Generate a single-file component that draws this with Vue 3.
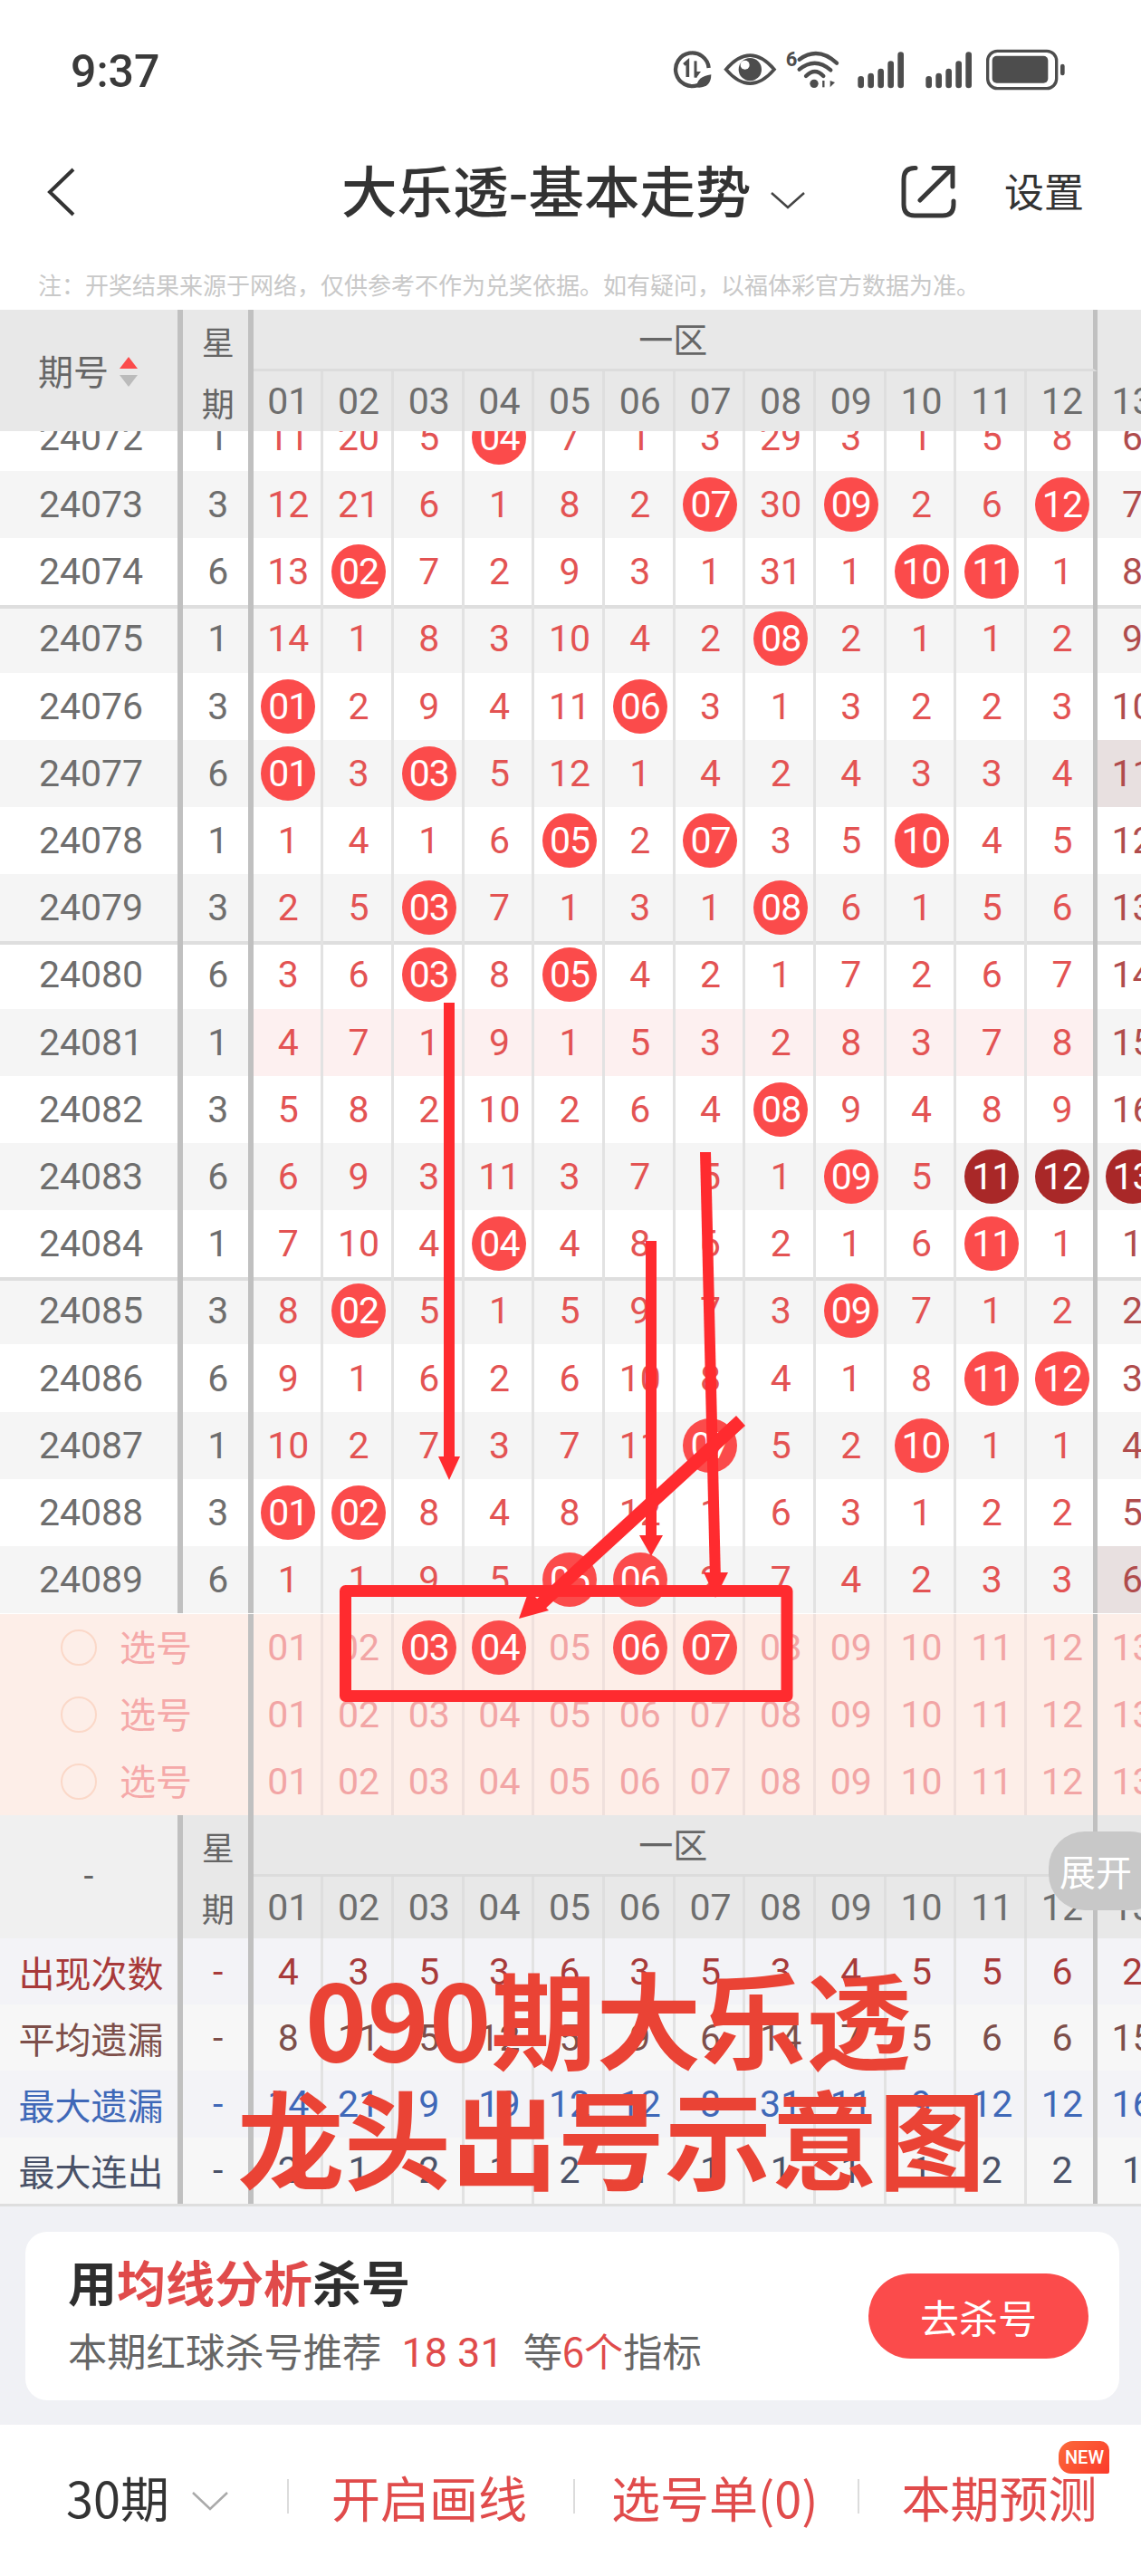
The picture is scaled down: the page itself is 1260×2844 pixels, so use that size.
<script setup>
import { computed } from "vue";

const cols = ["01","02","03","04","05","06","07","08","09","10","11","12","13"];

// b = red ball, d = dark ball (consecutive)
const raw = [
  ["24072", 1, "11 20 5 b04 7 1 3 29 3 1 5 8 6"],
  ["24073", 3, "12 21 6 1 8 2 b07 30 b09 2 6 b12 7"],
  ["24074", 6, "13 b02 7 2 9 3 1 31 1 b10 b11 1 8"],
  ["24075", 1, "14 1 8 3 10 4 2 b08 2 1 1 2 9"],
  ["24076", 3, "b01 2 9 4 11 b06 3 1 3 2 2 3 10"],
  ["24077", 6, "b01 3 b03 5 12 1 4 2 4 3 3 4 11"],
  ["24078", 1, "1 4 1 6 b05 2 b07 3 5 b10 4 5 12"],
  ["24079", 3, "2 5 b03 7 1 3 1 b08 6 1 5 6 13"],
  ["24080", 6, "3 6 b03 8 b05 4 2 1 7 2 6 7 14"],
  ["24081", 1, "4 7 1 9 1 5 3 2 8 3 7 8 15"],
  ["24082", 3, "5 8 2 10 2 6 4 b08 9 4 8 9 16"],
  ["24083", 6, "6 9 3 11 3 7 5 1 b09 5 d11 d12 d13"],
  ["24084", 1, "7 10 4 b04 4 8 6 2 1 6 b11 1 1"],
  ["24085", 3, "8 b02 5 1 5 9 7 3 b09 7 1 2 2"],
  ["24086", 6, "9 1 6 2 6 10 8 4 1 8 b11 b12 3"],
  ["24087", 1, "10 2 7 3 7 11 b07 5 2 b10 1 1 4"],
  ["24088", 3, "b01 b02 8 4 8 12 1 6 3 1 2 2 5"],
  ["24089", 6, "1 1 9 5 b05 b06 2 7 4 2 3 3 6"],
];

function parseCell(s) {
  if (s[0] === "b" || s[0] === "d") return { text: s.slice(1), kind: s[0] };
  return { text: s, kind: "" };
}

const rows = computed(() =>
  raw.map(([id, week, cells], i) => ({
    id,
    week,
    cells: cells.split(" ").map(parseCell),
    gray: i % 2 === 1,
    groupStart: id.endsWith("5") || id.endsWith("0"),
    pink: id === "24081",
    tint13: id === "24077" || id === "24089",
  }))
);

const picks = [
  ["03", "04", "06", "07"],
  [],
  [],
];

const stats = [
  { label: "出现次数", cls: "s-red", vals: "4 3 5 3 6 3 5 3 4 5 5 6 2" },
  { label: "平均遗漏", cls: "s-brown", vals: "8 11 5 12 5 9 6 14 7 5 6 6 15" },
  { label: "最大遗漏", cls: "s-blue", vals: "14 21 9 19 12 12 8 31 11 9 12 12 16" },
  { label: "最大连出", cls: "s-navy", vals: "2 1 2 1 2 1 1 1 1 1 2 2 1" },
];
</script>

<template>
  <div class="page">
    <!-- status bar -->
    <div class="status">
      <span class="time">9:37</span>
      <svg class="status-icons" width="500" height="100" viewBox="0 0 1500 300">
        <g fill="#4d4d4d" stroke="#4d4d4d">
          <path d="M212 195A55 55 0 1 1 248 138" fill="none" stroke-width="13" />
          <path d="M166 127L178 117V168" fill="none" stroke-width="11" />
          <path d="M204 115V170" fill="none" stroke-width="9" />
          <path d="M206 172L222 150H206Z" stroke="none" />
          <path d="M208 202Q208 166 256 160Q256 202 216 203Z" stroke="none" />
          <path d="M305 143Q385 50 465 143Q385 236 305 143Z" fill="none" stroke-width="11" />
          <circle cx="385" cy="143" r="38" stroke="none" />
          <circle cx="368" cy="128" r="15" fill="#fff" stroke="none" />
          <path d="M548 110Q610 65 672 122" fill="none" stroke-width="13" stroke-linecap="round" />
          <path d="M548 143Q600 100 652 145" fill="none" stroke-width="13" stroke-linecap="round" />
          <path d="M570 165Q600 135 628 165" fill="none" stroke-width="13" stroke-linecap="round" />
          <circle cx="597" cy="190" r="14" stroke="none" />
          <path d="M628 180V202" fill="none" stroke-width="7" />
          <path d="M650 180V202L666 186Z" stroke="none" />
          <rect x="742" y="165" width="20" height="40" rx="10" stroke="none" />
          <rect x="775" y="155" width="20" height="50" rx="10" stroke="none" />
          <rect x="808" y="140" width="20" height="65" rx="10" stroke="none" />
          <rect x="841" y="115" width="20" height="90" rx="10" stroke="none" />
          <rect x="874" y="85" width="20" height="120" rx="10" stroke="none" />
          <rect x="967" y="165" width="20" height="40" rx="10" stroke="none" />
          <rect x="1000" y="155" width="20" height="50" rx="10" stroke="none" />
          <rect x="1033" y="140" width="20" height="65" rx="10" stroke="none" />
          <rect x="1066" y="115" width="20" height="90" rx="10" stroke="none" />
          <rect x="1099" y="85" width="20" height="120" rx="10" stroke="none" />
          <rect x="1172" y="82" width="228" height="124" rx="32" fill="none" stroke-width="10" />
          <rect x="1187" y="98" width="185" height="90" rx="15" stroke="none" />
          <rect x="1413" y="125" width="14" height="38" rx="7" stroke="none" />
        </g>
        <text x="503" y="133" class="wifi-six">6</text>
      </svg>
    </div>

    <!-- nav -->
    <div class="nav">
      <svg class="back" width="33" height="54" viewBox="0 0 33 54">
        <path d="M30 2L4 27L30 52" fill="none" stroke="#333" stroke-width="4" />
      </svg>
      <span class="title">大乐透-基本走势</span>
      <svg class="title-arrow" width="40" height="22" viewBox="0 0 40 22">
        <path d="M2 3L20 19L38 3" fill="none" stroke="#444" stroke-width="2.5" />
      </svg>
      <svg class="share" width="62" height="62" viewBox="0 0 62 62">
        <path d="M17 3.5H16Q4 3.5 4 16V44Q4 56 16 56H47Q59 56 59 44V40" fill="none" stroke="#383838" stroke-width="5" stroke-linecap="round" />
        <path d="M22 39L58 3.500M37 3.500H58V24" fill="none" stroke="#383838" stroke-width="5" stroke-linecap="round" />
      </svg>
      <span class="setting">设置</span>
    </div>

    <div class="notice">注：开奖结果来源于网络，仅供参考不作为兑奖依据。如有疑问，以福体彩官方数据为准。</div>

    <!-- top header -->
    <div class="head">
      <div class="h-id">
        <span>期号</span>
        <span class="sort"><i class="up"></i><i class="down"></i></span>
      </div>
      <div class="h-week"><span>星</span><span>期</span></div>
      <div class="h-zone">
        <div class="zone-title"><span>一区</span></div>
        <div class="zone-nums">
          <span v-for="c in cols" :key="c" class="h-num">{{ c }}</span>
        </div>
      </div>
    </div>

    <!-- scrolled rows -->
    <div class="body">
      <div class="body-inner">
        <div
          v-for="r in rows"
          :key="r.id"
          class="row"
          :class="{ gray: r.gray, group: r.groupStart, pink: r.pink, tint13: r.tint13 }"
        >
          <div class="c-id">{{ r.id }}</div>
          <div class="c-week">{{ r.week }}</div>
          <div v-for="(cell, i) in r.cells" :key="i" class="c-n">
            <span v-if="cell.kind" class="ball" :class="{ dark: cell.kind === 'd' }">{{ cell.text }}</span>
            <template v-else>{{ cell.text }}</template>
          </div>
        </div>
      </div>
    </div>

    <!-- pick rows -->
    <div v-for="(p, idx) in picks" :key="idx" class="row pick">
      <div class="pick-label">
        <i class="radio"></i>
        <span>选号</span>
      </div>
      <div v-for="c in cols" :key="c" class="c-n">
        <span v-if="p.includes(c)" class="ball">{{ c }}</span>
        <template v-else>{{ c }}</template>
      </div>
    </div>

    <!-- bottom header -->
    <div class="head head2">
      <div class="h-id light"><span>-</span></div>
      <div class="h-week"><span>星</span><span>期</span></div>
      <div class="h-zone">
        <div class="zone-title"><span>一区</span></div>
        <div class="zone-nums">
          <span v-for="c in cols" :key="c" class="h-num">{{ c }}</span>
        </div>
      </div>
      <div class="expand">展开</div>
    </div>

    <!-- stats -->
    <div v-for="(s, i) in stats" :key="s.label" class="row stat" :class="[s.cls, i % 2 ? 'odd' : 'even']">
      <div class="c-id">{{ s.label }}</div>
      <div class="c-week">-</div>
      <div v-for="(v, j) in s.vals.split(' ')" :key="j" class="c-n">{{ v }}</div>
    </div>

    <!-- promo -->
    <div class="promo-wrap">
      <div class="promo">
        <div>
          <div class="promo-title">用<em>均线分析</em>杀号</div>
          <div class="promo-sub">本期红球杀号推荐<em class="gap">18 31</em>等<em>6个</em>指标</div>
        </div>
        <div class="promo-btn">去杀号</div>
      </div>
    </div>

    <!-- bottom bar -->
    <div class="bar">
      <div class="bar-period">
        <span>30期</span>
        <svg width="42" height="22" viewBox="0 0 42 22">
          <path d="M2 2L21 20L40 2" fill="none" stroke="#aaa" stroke-width="2.5" />
        </svg>
      </div>
      <i class="bar-sep"></i>
      <span class="bar-link w1">开启画线</span>
      <i class="bar-sep"></i>
      <span class="bar-link w2">选号单(0)</span>
      <i class="bar-sep"></i>
      <span class="bar-link w3">本期预测<b class="new">NEW</b></span>
    </div>

    <!-- hand-drawn marks on top of the screenshot -->
    <svg class="marks" width="1260" height="2844" viewBox="0 0 1260 2844">
      <g fill="#ff2b2f" stroke="none">
        <rect x="490" y="1107" width="12" height="510" />
        <path d="M484 1608H508L496 1634Z" />
        <rect x="713" y="1370" width="12" height="330" />
        <path d="M706 1695H732L719 1718Z" />
        <path d="M773 1272H785L796 1745H784Z" />
        <path d="M777 1736H804L790 1764Z" />
        <path d="M813 1563L823 1574L600 1778L590 1768Z" />
        <path d="M584 1756L606 1778L573 1787Z" />
      </g>
      <rect x="381.500" y="1756.500" width="487.500" height="116" fill="none" stroke="#ff2b2f" stroke-width="13" stroke-linejoin="round" />
    </svg>
    <div class="caption c1">090期大乐透</div>
    <div class="caption c2">龙头出号示意图</div>
  </div>
</template>

<style>
body {
  margin: 0;
  background: #fff;
}
</style>

<style scoped>
.page {
  position: relative;
  width: 1260px;
  height: 2844px;
  overflow: hidden;
  background: #fff;
  font-family: "Noto Sans CJK SC", "Noto Sans", sans-serif;
  color: #333;
}

.status {
  height: 156px;
  display: flex;
  align-items: center;
  justify-content: space-between;
  padding-left: 78px;
}
.time {
  margin-top: 2px;
  font-family: Roboto, sans-serif;
  font-size: 50px;
  font-weight: 500;
  color: #3a3a3a;
}
.status-icons {
  margin-right: 60px;
  margin-top: 2px;
}
.wifi-six {
  font-family: Roboto, sans-serif;
  font-size: 66px;
  font-weight: 700;
  fill: #4d4d4d;
}

.nav {
  height: 112px;
  display: flex;
  align-items: center;
  padding-left: 51px;
}
.title {
  margin-left: 293px;
  margin-top: -6px;
  font-size: 61.5px;
  font-weight: 500;
  line-height: 112px;
  color: #333;
}
.title-arrow {
  margin-left: 21px;
  margin-top: 18px;
}
.share {
  margin-left: 103.5px;
  margin-top: 1px;
}
.setting {
  margin-left: 53px;
  margin-top: -5px;
  font-size: 44px;
  color: #333;
}

.notice {
  height: 74px;
  padding: 26px 0 0 42px;
  box-sizing: border-box;
  font-size: 26px;
  line-height: 40px;
  color: #c8c8c8;
  white-space: nowrap;
}

.head {
  position: relative;
  height: 134px;
  display: flex;
  background: #e8e8e8;
  color: #666;
}
.head2 {
  height: 136px;
}
.h-id {
  width: 202px;
  flex: none;
  display: flex;
  align-items: center;
  padding: 0 0 3px 42px;
  box-sizing: border-box;
  border-right: 6px solid #c0c0c0;
  font-size: 39px;
}
.h-id.light {
  background: #f0f0f0;
  justify-content: center;
  padding-left: 0;
  font-family: Roboto, sans-serif;
}
.sort {
  display: flex;
  flex-direction: column;
  gap: 7px;
  margin-left: 12px;
  margin-top: 6px;
}
.sort i {
  width: 0;
  height: 0;
  border-left: 10px solid transparent;
  border-right: 10px solid transparent;
}
.sort .up {
  border-bottom: 13px solid #fb4b4b;
}
.sort .down {
  border-top: 13px solid #bbb;
}
.h-week {
  width: 77.5px;
  flex: none;
  box-sizing: border-box;
  border-right: 6px solid #c0c0c0;
  display: flex;
  flex-direction: column;
  align-items: center;
  padding-left: 6px;
  font-size: 36px;
  line-height: 68px;
}
.h-zone {
  flex: none;
  width: 1010.1px;
  display: flex;
  flex-direction: column;
}
.zone-title {
  height: 68px;
  width: 932.4px;
  box-sizing: border-box;
  border-right: 5px solid #c0c0c0;
  display: flex;
  align-items: center;
  justify-content: center;
  padding-bottom: 4px;
  font-size: 38px;
  border-bottom: 3px solid #dcdcdc;
}
.zone-nums {
  flex: 1;
  display: flex;
}
.h-num {
  width: 77.7px;
  flex: none;
  box-sizing: border-box;
  border-right: 3px solid #dedede;
  padding-left: 3px;
  display: flex;
  align-items: center;
  justify-content: center;
  font-family: Roboto, sans-serif;
  font-size: 41px;
  color: #6e6e6e;
}
.h-num:nth-child(12) {
  border-right: 5px solid #c0c0c0;
  padding-left: 5px;
}

.body {
  height: 1306px;
  overflow: hidden;
}
.body-inner {
  margin-top: -30.2px;
}
.row {
  position: relative;
  height: 74.2px;
  display: flex;
  background: #fff;
}
.row.gray {
  background: #f5f5f5;
}
.row.group {
  box-shadow: inset 0 4px 0 #dedede;
}
.c-id {
  width: 202px;
  flex: none;
  box-sizing: border-box;
  border-right: 6px solid #c0c0c0;
  display: flex;
  align-items: center;
  justify-content: center;
  padding-left: 5px;
  font-family: Roboto, sans-serif;
  font-size: 41px;
  color: #6e6e6e;
}
.c-week {
  width: 77.5px;
  flex: none;
  box-sizing: border-box;
  border-right: 6px solid #c0c0c0;
  padding-left: 6px;
  display: flex;
  align-items: center;
  justify-content: center;
  font-family: Roboto, sans-serif;
  font-size: 41px;
  color: #6e6e6e;
}
.c-n {
  position: relative;
  width: 77.7px;
  flex: none;
  box-sizing: border-box;
  border-right: 3px solid #e2e2e2;
  padding-left: 3px;
  display: flex;
  align-items: center;
  justify-content: center;
  font-family: Roboto, sans-serif;
  font-size: 41px;
  color: #e35353;
}
.c-n:nth-child(14) {
  border-right: 5px solid #c0c0c0;
  padding-left: 5px;
}
.c-n:nth-child(15) {
  border-right: 0;
  padding-left: 0;
  color: #b04c4c;
}
.row.pink .c-n:not(:nth-child(15)) {
  background: #fdf0f0;
}
.row.tint13 .c-n:nth-child(15) {
  background: #e8e0e0;
}
.ball {
  flex: none;
  width: 60px;
  height: 60px;
  border-radius: 50%;
  background: #fb4b4b;
  color: #fff;
  display: flex;
  align-items: center;
  justify-content: center;
  font-size: 41px;
  letter-spacing: -1px;
}
.ball.dark {
  background: #a92828;
}

.row.pick {
  height: 74px;
  background: #fdeee8;
}
.pick-label {
  width: 279.5px;
  flex: none;
  box-sizing: border-box;
  border-right: 6px solid #c0c0c0;
  display: flex;
  align-items: center;
  padding-left: 67px;
  font-size: 40px;
  color: #f5a9a9;
}
.pick-label span {
  margin-top: -4px;
}
.radio {
  width: 40px;
  height: 40px;
  border-radius: 50%;
  box-sizing: border-box;
  border: 2px solid #fbd8c8;
  margin-right: 25px;
}
.row.pick .c-n {
  color: #f2a5a5;
  border-right-color: #efe0dc;
}
.row.pick .c-n:nth-child(13) {
  border-right: 5px solid #c0c0c0;
  padding-left: 5px;
}
.row.pick .c-n:nth-child(14) {
  border-right: 0;
  padding-left: 0;
}
.row.pick .ball {
  color: #fff;
}

.expand {
  position: absolute;
  left: 1158px;
  top: 18px;
  width: 130px;
  height: 87px;
  border-radius: 40px;
  background: #c8c8c8;
  color: #fff;
  font-size: 40px;
  line-height: 87px;
  padding-left: 12px;
  box-sizing: border-box;
  white-space: nowrap;
}

.row.stat {
  height: 73.2px;
}
.row.stat.even {
  background: #f3f3f7;
}
.row.stat.odd {
  background: #f7f7f7;
}
.row.stat .c-id {
  font-family: "Noto Sans CJK SC", sans-serif;
  font-size: 40px;
  white-space: nowrap;
}
.s-red .c-id,
.s-red .c-n,
.s-red .c-week {
  color: #a83a3a;
}
.s-brown .c-id,
.s-brown .c-n,
.s-brown .c-week {
  color: #7d4f4a;
}
.s-blue .c-id,
.s-blue .c-n,
.s-blue .c-week {
  color: #3f68b8;
}
.s-navy .c-id,
.s-navy .c-n,
.s-navy .c-week {
  color: #4a5268;
}

.promo-wrap {
  height: 244px;
  box-sizing: border-box;
  border-top: 3px solid #dedede;
  background: #f0f1f5;
  padding: 28px 24px 0 28px;
}
.promo {
  height: 186px;
  box-sizing: border-box;
  border-radius: 24px;
  background: #fff;
  display: flex;
  align-items: center;
  justify-content: space-between;
  padding: 0 34px 0 47px;
}
.promo em {
  font-style: normal;
  color: #e04b4b;
}
.promo-title {
  font-size: 54px;
  font-weight: 700;
  line-height: 62px;
  color: #2e2e2e;
}
.promo-sub {
  margin-top: 16px;
  font-size: 43.3px;
  line-height: 56px;
  color: #666;
  white-space: nowrap;
}
.promo-sub .gap {
  margin: 0 22px 0 22px;
  font-family: Roboto, sans-serif;
  font-size: 45px;
}
.promo-btn {
  width: 243px;
  height: 94px;
  border-radius: 47px;
  background: #fb4b4b;
  color: #fff;
  font-size: 43px;
  line-height: 94px;
  text-align: center;
}

.bar {
  height: 167px;
  display: flex;
  align-items: center;
  padding-bottom: 8px;
  box-sizing: border-box;
  font-size: 54px;
}
.bar-period {
  width: 317px;
  flex: none;
  box-sizing: border-box;
  padding-left: 73px;
  display: flex;
  align-items: center;
  gap: 24px;
  color: #333;
}
.bar-period svg {
  margin-top: 10px;
}
.bar-sep {
  width: 2px;
  height: 38px;
  flex: none;
  background: #dcdcdc;
}
.bar-link {
  position: relative;
  color: #e04b4b;
  white-space: nowrap;
}
.w1 {
  margin-left: 47px;
  margin-right: 51px;
}
.w2 {
  margin-left: 40px;
  margin-right: 44px;
}
.w3 {
  margin-left: 46px;
}
.new {
  position: absolute;
  right: -14px;
  top: -22px;
  width: 56px;
  height: 36px;
  border-radius: 16px 10px 2px 14px;
  background: linear-gradient(135deg, #fb6a3a, #fb3b2b);
  color: #fff;
  font-size: 20px;
  font-weight: 500;
  line-height: 36px;
  text-align: center;
  font-family: Roboto, sans-serif;
}

.marks {
  position: absolute;
  left: 0;
  top: 0;
  pointer-events: none;
}
.caption {
  position: absolute;
  font-weight: 700;
  line-height: 130px;
  color: #ea4335;
  white-space: nowrap;
}
.c1 {
  left: 337px;
  top: 2160px;
  font-size: 116px;
}
.c2 {
  left: 262px;
  top: 2293px;
  font-size: 118px;
}
</style>
